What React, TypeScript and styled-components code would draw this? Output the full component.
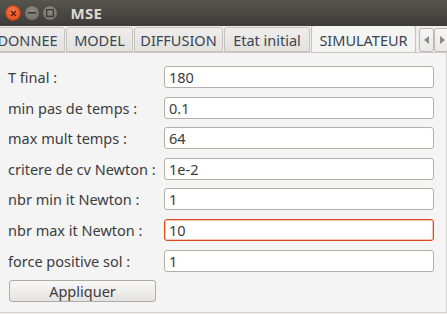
import React from "react";
import styled, { createGlobalStyle } from "styled-components";

const Global = createGlobalStyle`
  html, body { margin: 0; padding: 0; background: #f2f2f2; }
  body { font-family: "Noto Sans", "DejaVu Sans", sans-serif; }
  * { box-sizing: border-box; }
`;

const Window = styled.div`
  width: 447px;
  height: 314px;
  display: flex;
  flex-direction: column;
  background: #f2f1f0;
  overflow: hidden;
`;

const TitleBar = styled.div`
  height: 26px;
  flex: none;
  display: flex;
  align-items: center;
  padding-left: 5px;
  gap: 2.5px;
  background: linear-gradient(#56544e, #3d3c38);
`;

const Circle = styled.div<{ $red?: boolean }>`
  width: 16px;
  height: 16px;
  border-radius: 50%;
  display: flex;
  align-items: center;
  justify-content: center;
  background: ${(p) =>
    p.$red
      ? "radial-gradient(circle at 50% 35%, #f4784a, #df4a16)"
      : "radial-gradient(circle at 50% 35%, #8d8b86, #6c6a65)"};
  border: 1px solid ${(p) => (p.$red ? "#b33a10" : "#4a4843")};
`;

const Title = styled.div`
  margin-left: 10px;
  color: #dfdbd2;
  font-weight: bold;
  font-size: 15px;
  letter-spacing: 0.3px;
`;

const TabStrip = styled.div`
  height: 27px;
  flex: none;
  display: flex;
  align-items: flex-end;
  background: #eeedeb;
  position: relative;
  overflow: hidden;
  border-bottom: 1px solid #cac8c4;
`;

const Tabs = styled.div`
  display: flex;
  align-items: flex-end;
  margin-left: -10px;
  height: 100%;
`;

const Tab = styled.div<{ $active?: boolean; $w: number }>`
  width: ${(p) => p.$w}px;
  height: ${(p) => (p.$active ? 28 : 25)}px;
  margin-bottom: ${(p) => (p.$active ? -1 : 0)}px;
  display: flex;
  align-items: center;
  justify-content: center;
  font-size: 14.5px;
  color: #3a4452;
  padding-top: ${(p) => (p.$active ? 0 : 1)}px;
  background: ${(p) =>
    p.$active ? "#f4f4f3" : "linear-gradient(#efeeec, #e2e1de)"};
  border: 1px solid #c5c3bf;
  border-bottom: ${(p) => (p.$active ? "none" : "1px solid #c5c3bf")};
  border-radius: 3px 3px 0 0;
  margin-right: 1px;
  white-space: nowrap;
`;

const Arrows = styled.div`
  display: flex;
  margin-left: 2px;
  height: 24px;
  align-self: flex-end;
`;

const ArrowBtn = styled.div`
  width: 15px;
  height: 24px;
  border: 1px solid #bcbab6;
  border-radius: 3px;
  background: linear-gradient(#f6f6f5, #e9e8e6);
  display: flex;
  align-items: center;
  justify-content: center;
`;

const Panel = styled.div`
  flex: 1;
  background: #f4f4f4;
  border-right: 1px solid #d2d0cc;
  border-bottom: 1px solid #d2d0cc;
  margin-bottom: 1px;
  padding: 13px 12px 0 8px;
  display: grid;
  grid-template-columns: 156px 1fr;
  grid-auto-rows: 22px;
  row-gap: 8.6px;
  align-items: center;
  align-content: start;
`;

const Label = styled.div`
  font-size: 14.5px;
  color: #3c3c3c;
  white-space: nowrap;
`;

const Input = styled.div<{ $focus?: boolean }>`
  height: 22px;
  background: #ffffff;
  border: 1px solid ${(p) => (p.$focus ? "#dd4a1a" : "#b3b0ab")};
  box-shadow: ${(p) => (p.$focus ? "inset 0 0 0 1px #f6c7b3" : "none")};
  border-radius: 3px;
  padding-left: 4px;
  display: flex;
  align-items: center;
  font-size: 14.5px;
  color: #3c3c3c;
`;

const Button = styled.div`
  grid-column: 1 / 2;
  width: 147px;
  height: 22px;
  margin-left: 1px;
  border: 1px solid #aeaca7;
  border-radius: 3px;
  background: linear-gradient(#f8f8f7, #e4e3e1);
  display: flex;
  align-items: center;
  justify-content: center;
  font-size: 14.5px;
  color: #3c3c3c;
`;

const rows: [string, string, boolean?][] = [
  ["T final :", "180"],
  ["min pas de temps :", "0.1"],
  ["max mult temps :", "64"],
  ["critere de cv Newton :", "1e-2"],
  ["nbr min it Newton :", "1"],
  ["nbr max it Newton :", "10", true],
  ["force positive sol :", "1"],
];

const tabs: [string, number, boolean?][] = [
  ["DONNEE", 75],
  ["MODEL", 67],
  ["DIFFUSION", 89],
  ["Etat initial", 86],
  ["SIMULATEUR", 105, true],
];

export default function App() {
  return (
    <Window>
      <Global />
      <TitleBar>
        <Circle $red>
          <svg width="7" height="7" viewBox="0 0 7 7">
            <path d="M1 1L6 6M6 1L1 6" stroke="#5a1a05" strokeWidth="1.3" />
          </svg>
        </Circle>
        <Circle>
          <svg width="8" height="2" viewBox="0 0 8 2">
            <rect x="0" y="0" width="8" height="1.6" fill="#3a3935" />
          </svg>
        </Circle>
        <Circle>
          <svg width="8" height="8" viewBox="0 0 8 8">
            <rect x="0.7" y="0.7" width="6.6" height="6.6" fill="none" stroke="#3a3935" strokeWidth="1.3" />
          </svg>
        </Circle>
        <Title>MSE</Title>
      </TitleBar>
      <TabStrip>
        <Tabs>
          {tabs.map(([t, w, a]) => (
            <Tab key={t} $w={w} $active={a}>
              {t}
            </Tab>
          ))}
        </Tabs>
        <Arrows>
          <ArrowBtn>
            <svg width="6" height="8" viewBox="0 0 6 8">
              <path d="M5 0L0 4L5 8Z" fill="#8a8884" />
            </svg>
          </ArrowBtn>
          <ArrowBtn>
            <svg width="6" height="8" viewBox="0 0 6 8">
              <path d="M1 0L6 4L1 8Z" fill="#8a8884" />
            </svg>
          </ArrowBtn>
        </Arrows>
      </TabStrip>
      <Panel>
        {rows.map(([l, v, f]) => (
          <React.Fragment key={l}>
            <Label>{l}</Label>
            <Input $focus={f}>{v}</Input>
          </React.Fragment>
        ))}
        <Button>Appliquer</Button>
      </Panel>
    </Window>
  );
}
